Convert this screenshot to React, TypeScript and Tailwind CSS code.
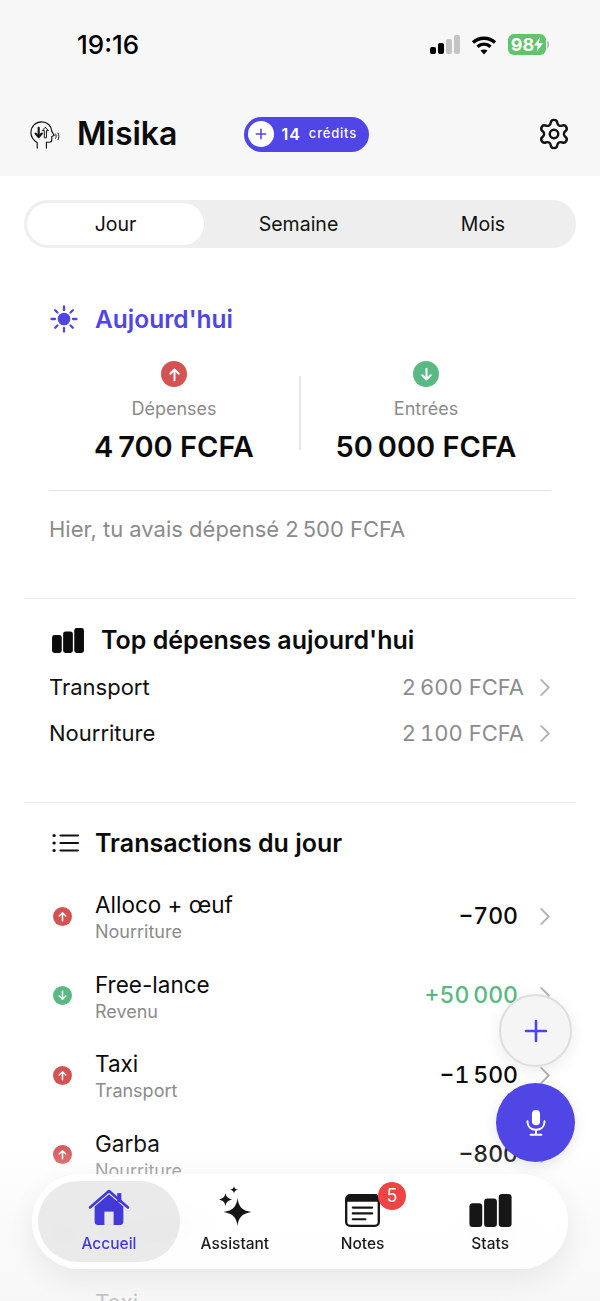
const FONT = "font-['Inter','Noto_Sans',sans-serif]";

const transactions = [
  { name: 'Alloco + œuf', cat: 'Nourriture', amount: '−700', kind: 'out' },
  { name: 'Free-lance', cat: 'Revenu', amount: '+50\u202f000', kind: 'in' },
  { name: 'Taxi', cat: 'Transport', amount: '−1\u202f500', kind: 'out' },
  { name: 'Garba', cat: 'Nourriture', amount: '−800', kind: 'out' },
  { name: 'Riz sauce', cat: 'Nourriture', amount: '−600', kind: 'out' },
  { name: 'Taxi', cat: 'Transport', amount: '−1\u202f100', kind: 'out' },
];

function Chevron({ className }: { className: string }) {
  return (
    <svg viewBox="0 0 12 20" className={className} fill="none" stroke="#b3b3b3" strokeWidth="2" strokeLinecap="round" strokeLinejoin="round">
      <path d="M2 2l8 8-8 8" />
    </svg>
  );
}

function ArrowBadge({ kind, size }: { kind: string; size: number }) {
  const up = kind === 'out';
  return (
    <span
      className={`flex shrink-0 items-center justify-center rounded-full ${up ? 'bg-[#d55252]' : 'bg-[#59b982]'} ${size === 26 ? 'h-[26px] w-[26px]' : 'h-[19px] w-[19px]'}`}
    >
      <svg viewBox="0 0 24 24" className={size === 26 ? 'h-[17px] w-[17px]' : 'h-[13px] w-[13px]'} fill="none" stroke="#fff" strokeWidth="2.8" strokeLinecap="round" strokeLinejoin="round">
        {up ? <path d="M12 20V5M6 11l6-6 6 6" /> : <path d="M12 4v15M6 13l6 6 6-6" />}
      </svg>
    </span>
  );
}

function HeadLogo() {
  return (
    <svg viewBox="0 0 32 32" className="h-[31px] w-[31px] shrink-0" fill="none" stroke="#111" strokeWidth="1.2" strokeLinecap="round" strokeLinejoin="round">
      <path d="M8.500 30v-5.500C4.500 22 2 18.500 2 14 2 7.500 7 3 13 3c6 0 10 4 10.500 9.500l2.500 4.500-2.500 1v3.500c0 1.500-1 2.500-2.500 2.500h-3v6" />
      <path d="M10 9v9" strokeWidth="2.200" />
      <path d="M6.800 15l3.200 3.600 3.200-3.600" strokeWidth="2.200" />
      <path d="M17 19v-7h2l-3.200-3.500L12.800 12h2v7z" transform="translate(1 0)" strokeWidth="1" />
      <path d="M27.500 15.500c.8 1.500.8 3 0 4.500M30 14.500c1.200 2.200 1.200 4.500 0 6.800" strokeWidth="1" />
    </svg>
  );
}

function Gear() {
  return (
    <svg viewBox="0 0 24 24" className="h-[34px] w-[34px] text-[#111]" fill="none" stroke="currentColor" strokeWidth="1.700" strokeLinecap="round" strokeLinejoin="round">
      <path d="M9.671 4.136a2.340 2.340 0 0 1 4.659 0 2.340 2.340 0 0 0 3.319 1.915 2.340 2.340 0 0 1 2.330 4.033 2.340 2.340 0 0 0 0 3.831 2.340 2.340 0 0 1-2.330 4.033 2.340 2.340 0 0 0-3.319 1.915 2.340 2.340 0 0 1-4.659 0 2.340 2.340 0 0 0-3.320-1.915 2.340 2.340 0 0 1-2.330-4.033 2.340 2.340 0 0 0 0-3.831A2.340 2.340 0 0 1 6.350 6.051a2.340 2.340 0 0 0 3.319-1.915" />
      <circle cx="12" cy="12" r="3" />
    </svg>
  );
}

function Sun() {
  return (
    <svg viewBox="0 0 30 30" className="h-[30px] w-[30px] shrink-0" fill="none" stroke="#4f46e5" strokeWidth="2.300" strokeLinecap="round">
      <circle cx="15" cy="15" r="6.300" fill="#4f46e5" stroke="none" />
      <path d="M15 2.500v3.500M15 24v3.500M2.500 15H6M24 15h3.500M6.200 6.200l2.300 2.300M21.500 21.500l2.300 2.300M6.200 23.800l2.300-2.300M21.500 8.500l2.300-2.300" />
    </svg>
  );
}

function Bars({ className }: { className: string }) {
  return (
    <svg viewBox="0 0 46 36" className={className} fill="currentColor">
      <rect x="0" y="10" width="14" height="26" rx="3.500" />
      <rect x="16" y="5" width="14" height="31" rx="3.500" />
      <rect x="32" y="0" width="14" height="36" rx="3.500" />
    </svg>
  );
}

function ListIcon() {
  return (
    <svg viewBox="0 0 28 20" className="h-[20px] w-[28px] shrink-0" fill="none" stroke="#111" strokeWidth="2.200" strokeLinecap="round">
      <path d="M8.500 2.500H26M8.500 10H26M8.500 17.500H26" />
      <path d="M2 2.500h.2M2 10h.2M2 17.500h.2" strokeWidth="3.200" />
    </svg>
  );
}

function SectionDivider() {
  return <div className="mx-[24px] h-px bg-[#ececec]" />;
}

function Segmented() {
  return (
    <div className="mx-[24px] mt-[24px] flex h-[48px] items-center rounded-full bg-[#eeeeee] p-[3px] text-[19.500px] text-[#111]">
      <div className="flex h-[42px] w-[177px] items-center justify-center rounded-full bg-white pt-[2px]">Jour</div>
      <div className="w-[189px] pt-[2px] text-center">Semaine</div>
      <div className="w-[180px] pt-[2px] text-center">Mois</div>
    </div>
  );
}

function TopRow({ label, value }: { label: string; value: string }) {
  return (
    <div className="flex h-[46px] items-center">
      <span className="flex-1 text-[22px] text-[#111]">{label}</span>
      <span className="text-[22px] tabular-nums text-[#8c8c8c]">{value}</span>
      <Chevron className="ml-[15px] h-[19px] w-[12px]" />
    </div>
  );
}

function NavItem({ label, active, children }: { label: string; active?: boolean; children: React.ReactNode }) {
  return (
    <div className="flex flex-1 flex-col items-center">
      <div className="flex h-[46px] items-end justify-center">{children}</div>
      <span className={`mt-[6px] text-[15.500px] font-medium leading-[22px] ${active ? 'text-[#4338d8]' : 'text-[#1b1b1b]'}`}>{label}</span>
    </div>
  );
}

export default function App() {
  return (
    <div className={`${FONT} relative h-[1301px] w-[600px] overflow-hidden bg-white`}>
      {/* Status bar + header */}
      <header className="h-[176px] bg-[#f7f7f7]">
        <div className="flex h-[90px] items-start justify-between pl-[77px] pr-[51px] pt-[28px]">
          <span className="text-[26px] font-medium leading-[34px] text-black">19:16</span>
          <div className="flex items-center pt-[6px]">
            <svg viewBox="0 0 30 20" className="h-[20px] w-[30px]">
              <rect x="0" y="12" width="6" height="7" rx="2" fill="#000" />
              <rect x="8" y="8" width="6" height="11" rx="2" fill="#000" />
              <rect x="16" y="4" width="6" height="15" rx="2" fill="#c4c4c4" />
              <rect x="24" y="0" width="6" height="19" rx="2" fill="#c4c4c4" />
            </svg>
            <svg viewBox="0 0 26 20" className="ml-[11px] h-[20px] w-[26px]" fill="none" stroke="#000" strokeWidth="3.300">
              <path d="M2 7.500C8 1.800 18 1.800 24 7.500" />
              <path d="M6.500 11.800c3.800-3.500 9.200-3.500 13 0" />
              <path d="M13 19.500 9.500 15.500c2-1.500 5-1.500 7 0z" fill="#000" stroke="none" />
            </svg>
            <div className="ml-[11px] flex h-[21px] w-[38px] items-center justify-center rounded-[6px] bg-[#5fc46a] text-[18px] font-bold leading-none text-white">
              98
              <svg viewBox="0 0 10 16" className="h-[15px] w-[9px] shrink-0" fill="#fff">
                <path d="M6.500 0 0 9h4l-1 7 7-9.500H5.500z" />
              </svg>
            </div>
            <div className="ml-[1px] h-[7px] w-[2px] rounded-r-full bg-[#bdbdbd]" />
          </div>
        </div>
        <div className="flex items-center pl-[29px] pr-[29px] pt-[22px]">
          <HeadLogo />
          <span className="ml-[17px] text-[32px] font-semibold leading-[44px] text-[#0b0b0b]">Misika</span>
          <div className="ml-[67px] flex h-[35px] w-[125px] items-center rounded-full bg-[#4f46e5] pl-[4px]">
            <span className="flex h-[26px] w-[26px] items-center justify-center rounded-full bg-white">
              <svg viewBox="0 0 14 14" className="h-[12px] w-[12px]" stroke="#4f46e5" strokeWidth="1.800" strokeLinecap="round">
                <path d="M7 1.500v11M1.500 7h11" />
              </svg>
            </span>
            <span className="ml-[7px] text-[16px] font-semibold tracking-[1px] text-white">14</span>
            <span className="ml-[8px] text-[13px] font-medium tracking-[0.8px] text-white">crédits</span>
          </div>
          <div className="flex-1" />
          <Gear />
        </div>
      </header>

      <Segmented />

      {/* Aujourd'hui */}
      <section className="px-[49px] pt-[54px]">
        <div className="flex items-center">
          <Sun />
          <span className="ml-[16px] text-[24.500px] font-semibold leading-[34px] text-[#4f46e5]">Aujourd'hui</span>
        </div>
        <div className="mt-[25px] flex border-b border-[#e2e2e2] pb-[23px]">
          <div className="flex w-[250px] flex-col items-center">
            <ArrowBadge kind="out" size={26} />
            <span className="mt-[10px] text-[18px] leading-[24px] text-[#8b8b8b]">Dépenses</span>
            <span className="mt-[6px] text-[29px] font-semibold leading-[40px] text-[#0b0b0b]">4{'\u202f'}700 FCFA</span>
          </div>
          <div className="mt-[15px] h-[74px] w-[2px] bg-[#e6e6e6]" />
          <div className="flex flex-1 flex-col items-center">
            <ArrowBadge kind="in" size={26} />
            <span className="mt-[10px] text-[18px] leading-[24px] text-[#8b8b8b]">Entrées</span>
            <span className="mt-[6px] text-[29px] font-semibold leading-[40px] text-[#0b0b0b]">50{'\u202f'}000 FCFA</span>
          </div>
        </div>
        <p className="pt-[23px] text-[22px] leading-[30px] text-[#8b8b8b]">Hier, tu avais dépensé 2{'\u202f'}500 FCFA</p>
      </section>

      <div className="mt-[54px]">
        <SectionDivider />
      </div>

      {/* Top dépenses */}
      <section className="px-[49px] pb-[46px] pt-[24px]">
        <div className="flex items-center">
          <Bars className="ml-[2px] h-[25px] w-[34px] shrink-0 text-[#0b0b0b]" />
          <span className="ml-[16px] text-[25px] font-semibold leading-[34px] text-[#0b0b0b]">Top dépenses aujourd'hui</span>
        </div>
        <div className="mt-[7px]">
          <TopRow label="Transport" value={'2\u202f600 FCFA'} />
          <TopRow label="Nourriture" value={'2\u202f100 FCFA'} />
        </div>
      </section>

      <SectionDivider />

      {/* Transactions */}
      <section className="px-[49px] pt-[23px]">
        <div className="flex items-center">
          <span className="ml-[3px]">
            <ListIcon />
          </span>
          <span className="ml-[15px] text-[25px] font-semibold leading-[34px] text-[#0b0b0b]">Transactions du jour</span>
        </div>
        <div className="mt-[26px]">
          {transactions.map((t, i) => (
            <div key={i} className="flex h-[79.500px] items-start pt-[4px]">
              <div className="flex h-[52px] w-[46px] items-center pl-[4px]">
                <ArrowBadge kind={t.kind} size={19} />
              </div>
              <div className="flex-1">
                <div className="text-[22.500px] leading-[30px] text-[#0b0b0b]">{t.name}</div>
                <div className="text-[18px] leading-[24px] text-[#8b8b8b]">{t.cat}</div>
              </div>
              <div className="flex h-[52px] items-center">
                <span className={`text-[23px] font-medium tabular-nums ${t.kind === 'in' ? 'text-[#59b982]' : 'text-[#0b0b0b]'}`}>{t.amount}</span>
                <Chevron className="ml-[21px] h-[19px] w-[12px]" />
              </div>
            </div>
          ))}
        </div>
      </section>

      {/* Bottom fade under the tab bar */}
      <div className="pointer-events-none absolute bottom-0 left-0 right-0 h-[160px] bg-gradient-to-b from-white/0 via-[#f8f8f8]/70 to-[#f5f5f5]/80" />

      {/* Floating buttons */}
      <button className="absolute left-[499px] top-[994px] flex h-[73px] w-[73px] items-center justify-center rounded-full border-2 border-[#dedede] bg-[#f5f5f5] shadow-[0_4px_16px_rgba(0,0,0,0.08)]">
        <svg viewBox="0 0 24 24" className="h-[24px] w-[24px]" stroke="#4f46e5" strokeWidth="2.600" strokeLinecap="round">
          <path d="M12 2v20M2 12h20" />
        </svg>
      </button>
      <button className="absolute left-[496px] top-[1083px] flex h-[79px] w-[79px] items-center justify-center rounded-full bg-[#4f46e5] shadow-[0_4px_14px_rgba(0,0,0,0.10)]">
        <svg viewBox="0 0 24 30" className="h-[27px] w-[22px]" fill="none" stroke="#fff" strokeWidth="2.200" strokeLinecap="round">
          <rect x="7.500" y="1" width="9" height="17" rx="4.500" fill="#fff" stroke="none" />
          <path d="M2.500 13.500c0 6 4 9.500 9.500 9.500s9.500-3.500 9.500-9.500M12 23v5M6 28.500h12" />
        </svg>
      </button>

      {/* Tab bar */}
      <nav className="absolute left-[32px] top-[1174px] flex h-[95px] w-[536px] items-start rounded-full bg-white/85 px-[6px] pt-[7px] shadow-[0_10px_28px_rgba(0,0,0,0.07)] backdrop-blur-md">
        <div className="h-[81px] w-[142px] shrink-0 rounded-full bg-[#d8d8d8]/55">
          <NavItem label="Accueil" active>
            <svg viewBox="0 0 40 38" className="h-[39px] w-[42px]" fill="#4338d8">
              <path d="M6 18 20 6l14 12v15c0 2-1.300 3-3 3H9c-1.700 0-3-1-3-3z" />
              <path d="M1.500 19 20 3l18.500 16" fill="none" stroke="#4338d8" strokeWidth="2.600" strokeLinecap="round" strokeLinejoin="round" />
              <rect x="28" y="5" width="4" height="9" />
              <rect x="15.500" y="23" width="9" height="13" fill="#e9e9e9" />
            </svg>
          </NavItem>
        </div>
        <div className="ml-[-9px] flex w-[383px]">
          <NavItem label="Assistant">
            <svg viewBox="0 0 34 40" className="mb-[1px] h-[40px] w-[34px]" fill="#161616">
              <path d="M19.500 12c1 8.500 4.500 12.500 14 14-9.500 1.500-13 5.500-14 14-1-8.500-4.500-12.500-14-14 9.500-1.500 13-5.500 14-14z" />
              <path d="M7.500 7c.7 3.800 2.200 5.500 6.500 6.500-4.300 1-5.800 2.700-6.500 6.500-.7-3.800-2.200-5.500-6.500-6.500C5.300 12.500 6.800 10.800 7.500 7z" />
              <path d="M16 0c.4 2.300 1.200 3.200 4 3.700-2.800.5-3.600 1.400-4 3.700-.4-2.300-1.200-3.200-4-3.700 2.800-.5 3.600-1.400 4-3.700z" />
            </svg>
          </NavItem>
          <NavItem label="Notes">
            <div className="relative">
              <svg viewBox="0 0 36 34" className="h-[33px] w-[35px]">
                <rect x="1.200" y="1.200" width="33.600" height="31.600" rx="4" fill="#fff" stroke="#161616" strokeWidth="2.400" />
                <path d="M1 6c0-3 2-5 5-5h24c3 0 5 2 5 5v2H1z" fill="#161616" />
                <path d="M8 14h20M8 20h20M8 26h13" stroke="#161616" strokeWidth="2.200" strokeLinecap="round" />
              </svg>
              <span className="absolute left-[33px] top-[-12px] flex h-[28px] w-[28px] items-center justify-center rounded-full bg-[#ee4444] text-[18px] leading-none text-white">5</span>
            </div>
          </NavItem>
          <NavItem label="Stats">
            <Bars className="h-[33px] w-[45px] text-[#161616]" />
          </NavItem>
        </div>
      </nav>
    </div>
  );
}
